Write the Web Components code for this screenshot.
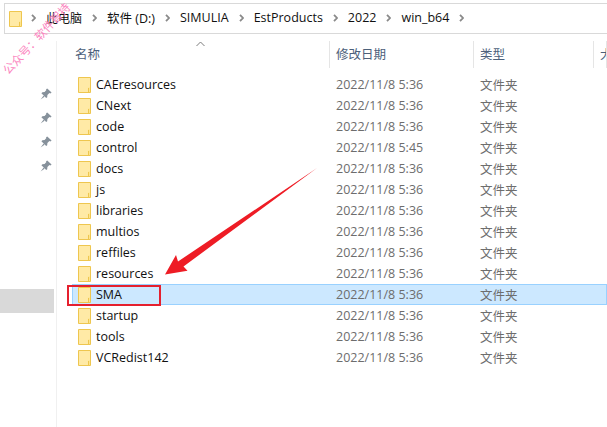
<!DOCTYPE html>
<html><head><meta charset="utf-8"><style>
html,body{margin:0;padding:0;background:#fff;height:100%;overflow:hidden}
body{font-family:"Open Sans","Noto Sans CJK SC",sans-serif;font-size:12.5px}
</style></head><body>
<x-explorer>
<x-crumb-bar slot="bar">
<x-crumb style="font-size:12px;margin-left:-1px">此电脑</x-crumb><x-crumb>软件 (D:)</x-crumb><x-crumb>SIMULIA</x-crumb><x-crumb>EstProducts</x-crumb><x-crumb>2022</x-crumb><x-crumb>win_b64</x-crumb><x-crumb></x-crumb>
</x-crumb-bar>
<x-quick-pane slot="side"></x-quick-pane>
<x-file-list slot="main">
<x-row name="CAEresources" date="2022/11/8 5:36"></x-row>
<x-row name="CNext" date="2022/11/8 5:36"></x-row>
<x-row name="code" date="2022/11/8 5:36"></x-row>
<x-row name="control" date="2022/11/8 5:45"></x-row>
<x-row name="docs" date="2022/11/8 5:36"></x-row>
<x-row name="js" date="2022/11/8 5:36"></x-row>
<x-row name="libraries" date="2022/11/8 5:36"></x-row>
<x-row name="multios" date="2022/11/8 5:36"></x-row>
<x-row name="reffiles" date="2022/11/8 5:36"></x-row>
<x-row name="resources" date="2022/11/8 5:36"></x-row>
<x-row name="SMA" date="2022/11/8 5:36" selected></x-row>
<x-row name="startup" date="2022/11/8 5:36"></x-row>
<x-row name="tools" date="2022/11/8 5:36"></x-row>
<x-row name="VCRedist142" date="2022/11/8 5:36"></x-row>
</x-file-list>
<x-annotation slot="over"></x-annotation>
</x-explorer>
<script>
const FOLDER=`<svg width="13" height="16" viewBox="0 0 13 16"><path d="M.5.5H12.5V15.5H.5Z" fill="#fde58f" stroke="#eec64f"/><path d="M1 1H12V10.5H10V15H1Z" fill="#ffeaa6"/><path d="M10.5 11V15" stroke="#eec64f"/></svg>`;
function def(name,css,html){
  customElements.define(name,class extends HTMLElement{
    connectedCallback(){ if(this.shadowRoot)return;
      const r=this.attachShadow({mode:'open'});
      r.innerHTML=`<style>${css}</style>`+(typeof html==='function'?html(this):html);
    }
  });
}
def('x-explorer',`:host{display:block;position:relative;width:607px;height:427px;overflow:hidden}
.top{padding:3px 0 0 4px;height:41px;box-sizing:border-box}
.body{display:flex;height:386px}`,
`<div class="top"><slot name="bar"></slot></div><div class="body"><slot name="side"></slot><slot name="main"></slot></div><slot name="over"></slot>`);
def('x-crumb-bar',`:host{display:flex;align-items:center;height:31px;box-sizing:border-box;border:1px solid #d9d9d9;border-right:0;padding:0 0 2px 4px;color:#111}
svg{display:block;flex:none;margin-top:2px}`,
`${FOLDER}<slot></slot>`);
def('x-crumb',`:host{display:flex;align-items:center;white-space:nowrap;font-size:12.5px}
.c{width:25px;height:12px;display:flex;align-items:center;justify-content:center;flex:none;margin-top:1px}`,
`<span class="c"><svg width="5" height="8" viewBox="0 0 5 8"><path d="M1 .8L4 4L1 7.2" fill="none" stroke="#8a8a8a" stroke-width="1.8"/></svg></span><slot></slot>`);
def('x-quick-pane',`:host{display:block;position:relative;width:57px;flex:none;box-sizing:border-box;border-right:1px solid #f0f0f0;height:386px}
.pins{display:flex;flex-direction:column;gap:8px;padding:45px 0 0 40px}
.sel{position:absolute;left:0;top:248px;width:54px;height:24px;background:#d9d9d9}
svg{display:block}`,
`<div class="pins">${`<svg width="12" height="16" viewBox="0 0 12 16"><path d="M7.2 2.4L11.6 6.6L10.4 7.4L9.4 7L7.4 9L7.2 11.2L6.2 12L1.4 7.2L2.4 6.2L4.6 6L6.4 4L6 3.2Z" fill="#86919b"/><path d="M3.6 9.6L.6 13.4L4.6 10.8Z" fill="#86919b"/></svg>`.repeat(4)}</div><div class="sel"></div>`);
def('x-file-list',`:host{display:block;flex:1;min-width:0;position:relative}
.head{display:grid;grid-template-columns:273px 144px 120px 1fr;height:27px;color:#4c607a;font-size:12.5px;position:relative}
.head div{display:flex;align-items:center;padding:0 0 2px 6px;box-sizing:border-box;border-right:1px solid #e5e5e5;white-space:nowrap;overflow:hidden}
.head div:first-child{padding-left:18px}.head div:last-child{border:0}
.sort{position:absolute;left:139px;top:0}
.rows{padding:6px 0 0 15px}`,
`<div class="head"><div>名称</div><div>修改日期</div><div>类型</div><div>大小</div><svg class="sort" width="9" height="6" viewBox="0 0 9 6"><path d="M.5 5L4.5 1L8.5 5" fill="none" stroke="#7d7d7d"/></svg></div><div class="rows"><slot></slot></div>`);
def('x-row',`:host{display:grid;grid-template-columns:257px 144px 1fr;height:21px;box-sizing:border-box;align-items:center;white-space:nowrap;color:#6d6d6d;font-size:12.5px}
:host([selected]){background:#cce8ff;outline:1px solid #99d1ff;outline-offset:-1px}
.n{display:flex;align-items:center;gap:5px;padding-left:6px;color:#111}
.d{padding-left:7px}svg{display:block;flex:none}`,
h=>`<div class="n">${FOLDER}<span>${h.getAttribute('name')}</span></div><div class="d">${h.getAttribute('date')}</div><div class="d">文件夹</div>`);
def('x-annotation',`:host{display:block;position:absolute;inset:0;pointer-events:none}
.box{position:absolute;left:67px;top:285px;width:94px;height:21px;box-sizing:border-box;border:2px solid #e5202e}
svg{position:absolute;left:0;top:0}
.wm{position:absolute;left:-10.5px;top:31.5px;width:92px;text-align:center;transform:rotate(-47deg);color:#fb86c0;font-size:11.5px;line-height:12px;white-space:nowrap;font-family:"Noto Sans CJK SC",sans-serif}`,
`<div class="box"></div><svg width="607" height="427"><path d="M165 274.5L176 255L178 261.5L317 168L183.5 266.5L187.5 270.7Z" fill="#ee1c25"/></svg><div class="wm">公众号：软件智持</div>`);
</script>
</body></html>
